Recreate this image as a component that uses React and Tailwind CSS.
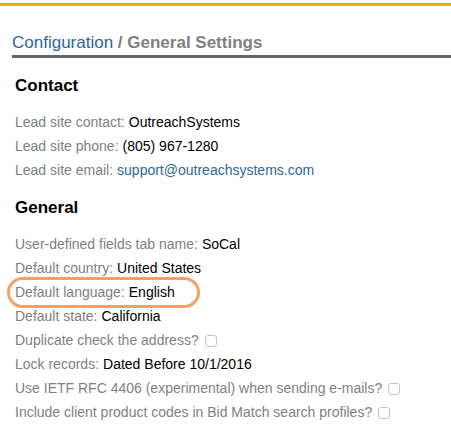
import React from "react";

const contactRows = [
  { label: "Lead site contact:", value: "OutreachSystems" },
  { label: "Lead site phone:", value: "(805) 967-1280" },
  { label: "Lead site email:", value: "support@outreachsystems.com", link: true },
];

const generalRows = [
  { label: "User-defined fields tab name:", value: "SoCal" },
  { label: "Default country:", value: "United States" },
  { label: "Default language:", value: "English", highlight: true },
  { label: "Default state:", value: "California" },
  { label: "Duplicate check the address?", checkbox: true },
  { label: "Lock records:", value: "Dated Before 10/1/2016" },
  { label: "Use IETF RFC 4406 (experimental) when sending e-mails?", checkbox: true },
  { label: "Include client product codes in Bid Match search profiles?", checkbox: true },
];

function Row({ row }) {
  return (
    <div className="relative flex items-center h-6 text-[14px] leading-6">
      <span className="text-[#808080]">{row.label}</span>
      {row.value && (
        <span className={row.link ? "ml-1 text-[#2b679e]" : "ml-1 text-black"}>{row.value}</span>
      )}
      {row.checkbox && (
        <span className="ml-[6px] mt-[1px] inline-block w-[12px] h-[12px] rounded-[3px] border border-[#c4c4c4] bg-white" />
      )}
      {row.highlight && (
        <span className="absolute left-[-8px] top-[-3px] w-[193px] h-[31px] rounded-[16px] border-[3px] border-[#f7a063]" />
      )}
    </div>
  );
}

function Section({ title, rows }) {
  return (
    <div>
      <h2 className="text-[17px] leading-6 font-bold text-black">{title}</h2>
      <div className="mt-[12px]">
        {rows.map((row, i) => (
          <Row key={i} row={row} />
        ))}
      </div>
    </div>
  );
}

export default function App() {
  return (
    <div className="w-[451px] h-[431px] bg-white overflow-hidden" style={{ fontFamily: '"Liberation Sans", Arial, sans-serif' }}>
      <div className="mt-[3px] h-[3px] bg-[#fca600]" />
      <div className="ml-3 mt-[27px] border-b-[3px] border-[#666666] pb-[2px]">
        <div className="text-[17px] leading-5">
          <span className="text-[#2d659b]">Configuration</span>
          <span className="font-bold text-[#808080]"> / General Settings</span>
        </div>
      </div>
      <div className="pl-[15px] mt-[16px]">
        <Section title="Contact" rows={contactRows} />
        <div className="mt-[14px]">
          <Section title="General" rows={generalRows} />
        </div>
      </div>
    </div>
  );
}
